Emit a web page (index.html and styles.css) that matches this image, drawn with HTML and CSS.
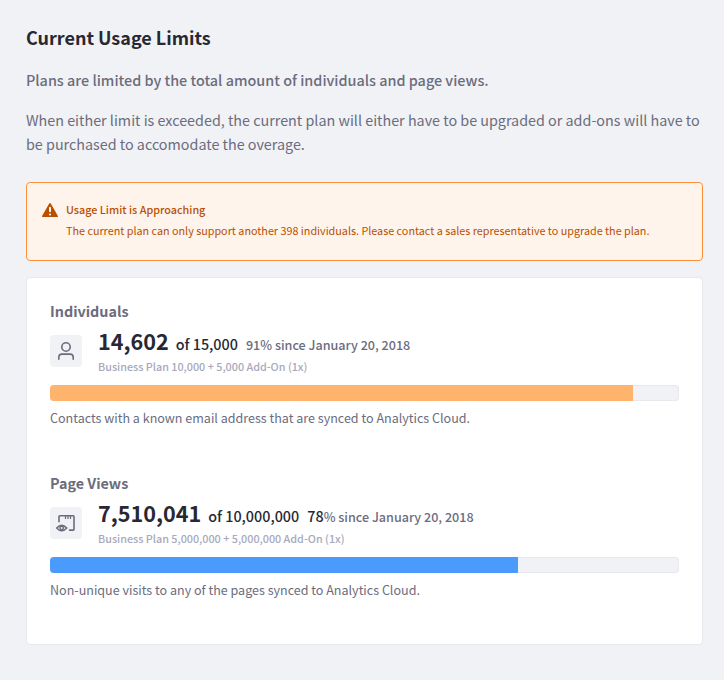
FILE: index.html
```html
<!DOCTYPE html>
<html lang="en">
<head>
<meta charset="utf-8">
<title>Current Usage Limits</title>
<link rel="stylesheet" href="styles.css">
</head>
<body>
<main class="page">
  <h1 class="title">Current Usage Limits</h1>
  <p class="lead">Plans are limited by the total amount of individuals and page views.</p>
  <p class="intro">When either limit is exceeded, the current plan will either have to be upgraded or add-ons will have to be purchased to accomodate the overage.</p>
  <section class="alert">
    <svg class="alert-icon" viewBox="0 0 16 16"><path d="M7.200 1.500Q8 .5 8.800 1.500L15.900 14Q16.200 15 15.200 15H.8Q-.2 15 .1 14Z" fill="#b95000"/><path d="M8 5.700v3.600" stroke="#fff4ec" stroke-width="2" stroke-linecap="round"/><circle cx="8" cy="12.500" r="1.050" fill="#fff4ec"/></svg>
    <div>
      <h2 class="alert-title">Usage Limit is Approaching</h2>
      <p class="alert-text">The current plan can only support another 398 individuals. Please contact a sales representative to upgrade the plan.</p>
    </div>
  </section>
  <section class="card">
    <article class="usage">
      <h2 class="usage-title">Individuals</h2>
      <div class="usage-row">
        <span class="sticker"><svg viewBox="0 0 32 32"><circle cx="16" cy="12" r="4.2"/><path d="M8.8 24.3v-2q0-3.2 3.2-3.2h8q3.200 0 3.200 3.200v2" stroke-linecap="round"/></svg></span>
        <div>
          <div class="figures"><span class="count">14,602</span><span class="total">of 15,000</span><span class="since">91% since January 20, 2018</span></div>
          <div class="plan">Business Plan 10,000 + 5,000 Add-On (1x)</div>
        </div>
      </div>
      <div class="bar"><div class="fill warn"></div></div>
      <p class="note">Contacts with a known email address that are synced to Analytics Cloud.</p>
    </article>
    <article class="usage">
      <h2 class="usage-title">Page Views</h2>
      <div class="usage-row">
        <span class="sticker"><svg viewBox="0 0 32 32"><path d="M9 14.800V9.500q0-.8.8-.8h13.400q.8 0 .8.8v12.800q0 .8-.8.8h-3.700" stroke-linecap="round"/><path d="M15.500 9v3M18 9v3M20.500 9v3" stroke-width="1.200"/><path d="M6.700 21q5-5.600 10 0-5 5.600-10 0Z"/><circle cx="11.700" cy="21" r="1.700" stroke-width="1.500"/></svg></span>
        <div>
          <div class="figures"><span class="count">7,510,041</span><span class="total">of 10,000,000</span><span class="since"><b>78</b>% since January 20, 2018</span></div>
          <div class="plan">Business Plan 5,000,000 + 5,000,000 Add-On (1x)</div>
        </div>
      </div>
      <div class="bar"><div class="fill info"></div></div>
      <p class="note">Non-unique visits to any of the pages synced to Analytics Cloud.</p>
    </article>
  </section>
</main>
</body>
</html>
```
FILE: styles.css
```css
* { box-sizing: border-box; }
body { margin: 0; background: #f1f2f5; color: #6b6c7e; font: 14.34px/24px "Noto Sans CJK SC", "Noto Sans", sans-serif; }
h1, h2, p { margin: 0; }
.page { padding: 23px 21px 35px 26px; }
.title { color: #272833; font-size: 17.98px; line-height: 28px; font-weight: 700; }
.lead { margin-top: 17px; font-size: 14.4px; font-weight: 500; }
.intro { margin-top: 16px; }
.alert { display: flex; gap: 8px; height: 79px; margin-top: 26px; padding: 17px 15px; border: 1px solid #ff8f39; border-radius: 4px; background: #fff4ec; color: #b95000; }
.alert-icon { flex: none; width: 16px; height: 16px; margin-top: 2px; }
.alert-title { margin-bottom: 2px; font-size: 10.8px; line-height: 18px; font-weight: 500; }
.alert-text { font-size: 10.79px; line-height: 21px; white-space: nowrap; }
.card { height: 368px; margin-top: 16px; padding: 21px 23px; border: 1px solid #e7e7ed; border-radius: 4px; background: #fff; }
.usage { height: 172px; }
.usage-title { font-size: 14.33px; line-height: 24px; font-weight: 700; }
.usage-row { display: flex; gap: 16px; height: 62px; padding-top: 5px; }
.sticker { flex: none; width: 32px; height: 32px; margin-top: 7px; border-radius: 4px; background: #f1f2f5; }
.sticker svg { display: block; fill: none; stroke: #6b6c7e; stroke-width: 1.6; }
.figures { display: flex; align-items: baseline; height: 29px; line-height: 26px; white-space: nowrap; }
.count { color: #272833; font-size: 21.6px; font-weight: 700; }
.total { margin-left: 7px; color: #272833; font-size: 14.36px; font-weight: 500; }
.since { margin-left: 8px; font-size: 12.58px; font-weight: 500; }
.since b { color: #272833; font-size: 14.36px; font-weight: 500; }
.plan { color: #a7a9bc; font-size: 10.79px; line-height: 18px; font-weight: 500; }
.bar { height: 16px; overflow: hidden; border-radius: 4px; background: #f1f2f5; box-shadow: inset 0 0 0 1px #e7e7ed; }
.fill { height: 16px; }
.warn { width: 583px; background: #ffb46e; }
.info { width: 468px; background: #4b9bff; }
.note { margin-top: 5px; font-size: 12.54px; line-height: 24px; }
```
